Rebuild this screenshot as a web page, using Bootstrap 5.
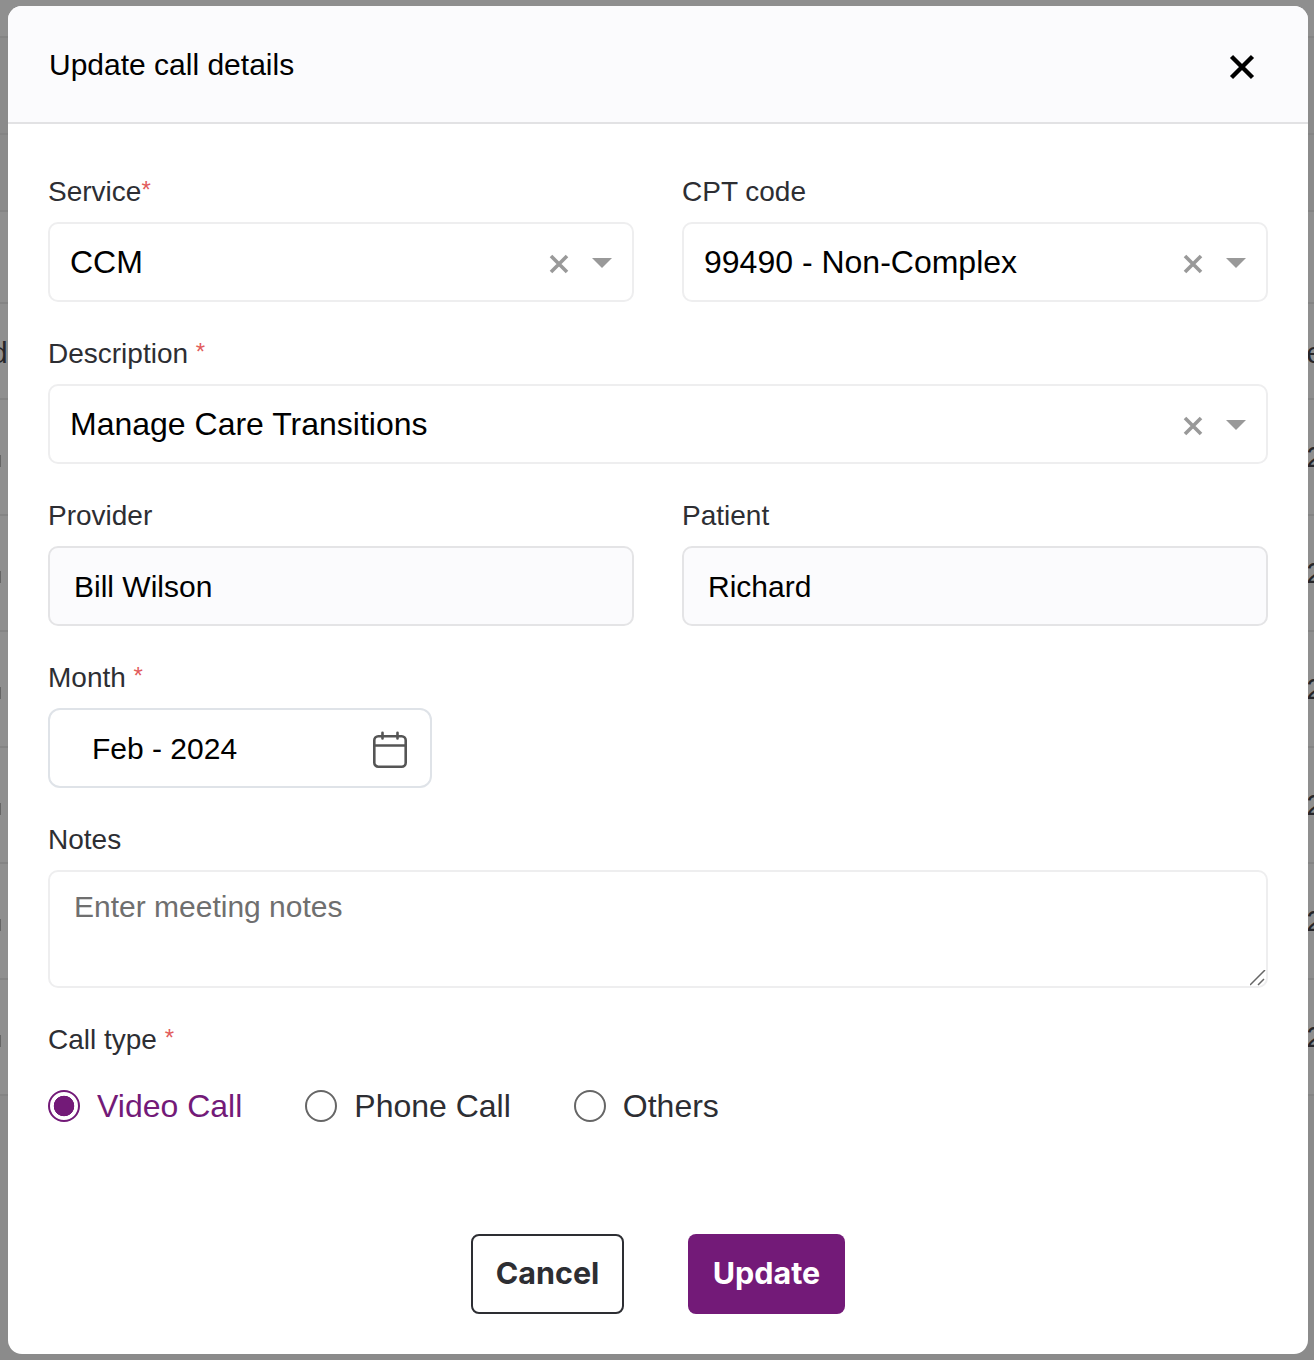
<!DOCTYPE html>
<html lang="en">
<head>
<meta charset="utf-8">
<title>Update call details</title>
<link href="https://cdn.jsdelivr.net/npm/bootstrap@5.3.0/dist/css/bootstrap.min.css" rel="stylesheet">
<style>
html,body{height:1360px;overflow:hidden}
body{background:#8b8b8b;font-family:"Liberation Sans",Arial,sans-serif;color:#2d2e33;position:relative}
.bg-rows{height:1360px;overflow:hidden}
.bg-row{border-bottom:2px solid #848484;color:#26262a;font-size:30px;line-height:30px;white-space:nowrap;background:#8f8f8f}
.bg-row.bg-dim{background:#8b8b8b}
.bg-l{margin-left:-9px}.bg-r{margin-right:-9px}
.bg-low{margin-top:3px}
.bg-tick{width:1px;height:12px;background:#666;margin-top:8px}
.r1{height:38px}.r2{height:97px}.r2b{height:77px}.r3{height:92px}.r4{height:96px}.r5{height:116px}
.dlg{position:absolute;left:8px;top:6px;width:1300px;height:1348px;background:#fff;border-radius:14px;overflow:hidden}
.dlg-head{height:118px;background:#fbfbfd;border-bottom:2px solid #e2e2e4;padding:0 40px 0 41px}
.dlg-title{font-size:30px;line-height:36px;color:#000;margin:1px 0 0;font-weight:400}
.dlg-close{width:28px;height:28px;padding:0;border:0;background:none;margin-right:12px;margin-top:6px;display:flex}
.dlg-body{padding:51px 40px 0}
.fld-row{display:flex;gap:48px;margin-bottom:35px}
.fld{flex:1 1 0;min-width:0}
.fld-lbl{display:block;font-size:28px;line-height:34px;margin-bottom:13px;color:#2d2e33}
.req{color:#e25c5c;font-size:24px;top:-3px;position:relative;vertical-align:baseline;line-height:0}
.sel-box{height:80px;border:2px solid #eeeeef;border-radius:10px;background:#fff;padding:0 20px;color:#000;font-size:32px;line-height:76px;display:flex;align-items:center}
.sel-text{flex:1 1 auto;white-space:nowrap}
.sel-x{margin-right:23px;margin-top:3px;display:flex}
.sel-caret{width:0;height:0;border-left:10px solid transparent;border-right:10px solid transparent;border-top:10px solid #999;margin-top:1px}
.ro-box{height:80px;border:2px solid #e4e4e6;border-radius:10px;background:#fbfbfd;color:#000;font-size:30px;padding:0 24px;display:flex;align-items:center}
.date-box{width:384px;height:80px;border:2px solid #dfe3e8;border-radius:12px;background:#fff;color:#000;font-size:30px;padding:0 22px 0 42px;display:flex;align-items:center;justify-content:space-between}
.date-box svg{margin-top:3px}
.note-wrap{position:relative}
.note-area.form-control{height:118px;border:2px solid #eeeeef;border-radius:10px;font-size:30px;line-height:36px;padding:17px 24px;color:#000;box-shadow:none;font-family:"Liberation Sans",Arial,sans-serif;resize:none}
.note-area.form-control::placeholder{color:#6f6f6f;opacity:1}
.note-grip{position:absolute;right:2px;bottom:2px;pointer-events:none}
.radio-row{display:flex;align-items:center;margin-top:31px}
.rad{display:flex;align-items:center;gap:17px;font-size:32px;line-height:36px;margin-right:63px;margin-bottom:0;color:#2d2e33}
.rad input.form-check-input{width:32px;height:32px;margin:0;flex:none;border:2px solid #666;background-color:#fff;box-shadow:none}
.rad input.form-check-input:checked{border-color:#731a78;background-color:#fff;background-image:radial-gradient(circle,#731a78 0,#731a78 10px,transparent 10.6px)}
.rad-on{color:#731a78}
.act-row{display:flex;justify-content:center;gap:64px;position:absolute;left:0;right:0;top:1228px}
.act-btn{height:80px;font-family:Inter,"Liberation Sans",sans-serif;font-weight:700;font-size:30.5px;line-height:1;border-radius:8px;display:flex;align-items:center;justify-content:center;padding:0 0 2px}
.act-cancel.btn{width:153px;border:2px solid #2d2e33;color:#2d2e33;background:#fff}
.act-update.btn{width:157px;border:0;color:#fff;background:#731a78}
</style>
</head>
<body>
<div class="bg-rows">
  <div class="bg-row r1"></div>
  <div class="bg-row bg-dim r2"></div>
  <div class="bg-row bg-dim r2b"></div>
  <div class="bg-row r3"></div>
  <div class="bg-row r4 d-flex justify-content-between align-items-center"><span class="bg-l bg-low">d</span><span class="bg-r bg-low">e</span></div>
  <div class="bg-row r5 d-flex justify-content-between align-items-center"><span class="bg-tick"></span><span class="bg-r">2</span></div>
  <div class="bg-row r5 d-flex justify-content-between align-items-center"><span class="bg-tick"></span><span class="bg-r">2</span></div>
  <div class="bg-row r5 d-flex justify-content-between align-items-center"><span class="bg-tick"></span><span class="bg-r">2</span></div>
  <div class="bg-row r5 d-flex justify-content-between align-items-center"><span class="bg-tick"></span><span class="bg-r">2</span></div>
  <div class="bg-row r5 d-flex justify-content-between align-items-center"><span class="bg-tick"></span><span class="bg-r">2</span></div>
  <div class="bg-row r5 d-flex justify-content-between align-items-center"><span class="bg-tick"></span><span class="bg-r">2</span></div>
</div>
<div class="dlg">
  <div class="dlg-head d-flex align-items-center justify-content-between">
    <h5 class="dlg-title">Update call details</h5>
    <button type="button" class="dlg-close" aria-label="Close"><svg width="28" height="28" viewBox="0 0 28 28"><path d="M3.5 3.5 24.5 24.5M24.5 3.5 3.5 24.5" stroke="#000" stroke-width="4.4" fill="none"/></svg></button>
  </div>
  <div class="dlg-body">
    <div class="fld-row">
      <div class="fld">
        <label class="fld-lbl">Service<span class="req">*</span></label>
        <div class="sel-box"><span class="sel-text">CCM</span><span class="sel-x"><svg width="20" height="20" viewBox="0 0 20 20"><path d="M2 2 18 18M18 2 2 18" stroke="#999" stroke-width="3.6" fill="none"/></svg></span><span class="sel-caret"></span></div>
      </div>
      <div class="fld">
        <label class="fld-lbl">CPT code</label>
        <div class="sel-box"><span class="sel-text">99490 - Non-Complex</span><span class="sel-x"><svg width="20" height="20" viewBox="0 0 20 20"><path d="M2 2 18 18M18 2 2 18" stroke="#999" stroke-width="3.6" fill="none"/></svg></span><span class="sel-caret"></span></div>
      </div>
    </div>
    <div class="fld-row">
      <div class="fld">
        <label class="fld-lbl">Description <span class="req">*</span></label>
        <div class="sel-box"><span class="sel-text">Manage Care Transitions</span><span class="sel-x"><svg width="20" height="20" viewBox="0 0 20 20"><path d="M2 2 18 18M18 2 2 18" stroke="#999" stroke-width="3.6" fill="none"/></svg></span><span class="sel-caret"></span></div>
      </div>
    </div>
    <div class="fld-row">
      <div class="fld">
        <label class="fld-lbl">Provider</label>
        <div class="ro-box">Bill Wilson</div>
      </div>
      <div class="fld">
        <label class="fld-lbl">Patient</label>
        <div class="ro-box">Richard</div>
      </div>
    </div>
    <div class="fld-row">
      <div class="fld">
        <label class="fld-lbl">Month <span class="req">*</span></label>
        <div class="date-box"><span>Feb - 2024</span>
          <svg width="36" height="38" viewBox="0 0 36 38" fill="none" stroke="#555" stroke-width="2.6" stroke-linecap="round"><rect x="2.3" y="5.3" width="31.4" height="30.4" rx="4"/><path d="M2.3 14.5H33.7M10.5 1.8V7.5M25.5 1.8V7.5"/></svg>
        </div>
      </div>
    </div>
    <div class="fld-row">
      <div class="fld">
        <label class="fld-lbl">Notes</label>
        <div class="note-wrap">
          <textarea class="form-control note-area" placeholder="Enter meeting notes"></textarea>
          <svg class="note-grip" width="16" height="16" viewBox="0 0 16 16" fill="none" stroke="#666" stroke-width="1.5"><path d="M0 15 15 0M8 15 14 9"/></svg>
        </div>
      </div>
    </div>
    <div class="fld">
      <label class="fld-lbl mb-0">Call type <span class="req">*</span></label>
      <div class="radio-row">
        <label class="rad rad-on"><input class="form-check-input" type="radio" name="ct" checked><span>Video Call</span></label>
        <label class="rad"><input class="form-check-input" type="radio" name="ct"><span>Phone Call</span></label>
        <label class="rad"><input class="form-check-input" type="radio" name="ct"><span>Others</span></label>
      </div>
    </div>
  </div>
  <div class="act-row">
    <button type="button" class="btn act-btn act-cancel">Cancel</button>
    <button type="button" class="btn act-btn act-update">Update</button>
  </div>
</div>
<script src="https://cdn.jsdelivr.net/npm/bootstrap@5.3.0/dist/js/bootstrap.bundle.min.js"></script>
</body>
</html>
